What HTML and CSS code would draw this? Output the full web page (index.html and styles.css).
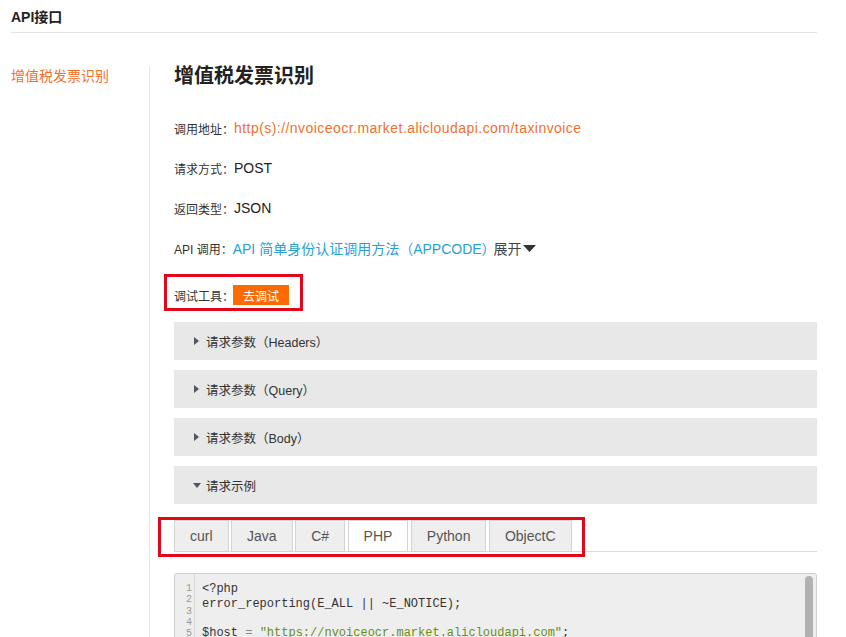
FILE: index.html
```html
<!DOCTYPE html>
<html lang="zh-CN">
<head>
<meta charset="utf-8">
<title>API接口</title>
<link rel="stylesheet" href="styles.css">
</head>
<body>
<div class="page">
  <div class="topbar">API接口</div>
  <div class="layout">
    <aside class="sidenav">
      <div class="nav-item">增值税发票识别</div>
    </aside>
    <main class="main">
      <h1 class="title">增值税发票识别</h1>
      <div class="row"><span class="label">调用地址：</span><span class="value link-orange url">http(s)://nvoiceocr.market.alicloudapi.com/taxinvoice</span></div>
      <div class="row"><span class="label">请求方式：</span><span class="value">POST</span></div>
      <div class="row"><span class="label">返回类型：</span><span class="value">JSON</span></div>
      <div class="row"><span class="label">API 调用：</span><span class="value link-blue">API 简单身份认证调用方法（APPCODE）</span><span class="value expand">展开<svg class="caret" width="13" height="7" viewBox="0 0 13 7"><path d="M0 0H13L6.5 7Z" fill="#333"/></svg></span></div>
      <div class="row debug">
        <span class="label">调试工具：</span><span class="btn">去调试</span>
        <div class="highlight hl-debug"></div>
      </div>
      <div class="panel"><svg class="tri" width="5" height="8" viewBox="0 0 5 8"><path d="M0 0L5 4L0 8Z" fill="#555"/></svg>请求参数（Headers）</div>
      <div class="panel"><svg class="tri" width="5" height="8" viewBox="0 0 5 8"><path d="M0 0L5 4L0 8Z" fill="#555"/></svg>请求参数（Query）</div>
      <div class="panel"><svg class="tri" width="5" height="8" viewBox="0 0 5 8"><path d="M0 0L5 4L0 8Z" fill="#555"/></svg>请求参数（Body）</div>
      <div class="panel"><svg class="tri down" width="8" height="5" viewBox="0 0 8 5"><path d="M0 0H8L4 5Z" fill="#555"/></svg>请求示例</div>
      <div class="tabbar">
        <div class="tabs">
          <span class="tab">curl</span>
          <span class="tab">Java</span>
          <span class="tab">C#</span>
          <span class="tab active">PHP</span>
          <span class="tab">Python</span>
          <span class="tab">ObjectC</span>
          <div class="highlight hl-tabs"></div>
        </div>
      </div>
      <div class="code">
        <div class="gutter">1<br>2<br>3<br>4<br>5<br>6<br>7<br>8<br>9<br>10</div>
        <pre class="source">&lt;?php
error_reporting(E_ALL || ~E_NOTICE);

$host <span class="op">=</span> <span class="str">"https://nvoiceocr.market.alicloudapi.com"</span>;
$path <span class="op">=</span> <span class="str">"/taxinvoice"</span>;
$method <span class="op">=</span> <span class="str">"POST"</span>;
$appcode <span class="op">=</span> <span class="str">"你自己的AppCode"</span>;
$headers <span class="op">=</span> array();</pre>
        <div class="scrollbar"><div class="thumb"></div></div>
      </div>
    </main>
  </div>
</div>
</body>
</html>
```
FILE: styles.css
```css
html, body {
  margin: 0;
  padding: 0;
  background: #fff;
}
body {
  font-family: "Liberation Sans", "Noto Sans CJK SC", sans-serif;
  color: #333;
  overflow: hidden;
}
.page {
  padding: 0 29px 0 11px;
}
.topbar {
  height: 32px;
  border-bottom: 1px solid #e6e6e6;
  display: flex;
  align-items: center;
  font-size: 14px;
  font-weight: bold;
  color: #222;
}
.layout {
  display: flex;
  margin-top: 33px;
}
.sidenav {
  width: 138px;
  flex: none;
  border-right: 1px solid #e8e8e8;
  min-height: 620px;
}
.nav-item {
  font-size: 14px;
  line-height: 20px;
  color: #f4702a;
}
.main {
  flex: 1;
  padding-left: 24px;
  min-width: 0;
}
.title {
  margin: 0;
  font-size: 20px;
  line-height: 20px;
  font-weight: bold;
  color: #222;
}
.row {
  display: flex;
  align-items: center;
  height: 20px;
  margin-top: 20px;
}
.title + .row {
  margin-top: 32px;
}
.label {
  font-size: 12px;
  color: #333;
}
.value {
  font-size: 14px;
  color: #222;
}
.url {
  letter-spacing: 0.45px;
}
.link-orange {
  color: #f4702a;
}
.link-blue {
  color: #27a0d6;
}
.expand {
  color: #444;
  display: flex;
  align-items: center;
  margin-left: -2px;
}
.caret {
  margin-left: 1px;
}
.debug {
  position: relative;
  margin-top: 27px;
}
.btn {
  display: inline-flex;
  align-items: center;
  height: 20px;
  padding: 0 10px;
  margin-left: -1px;
  background: #ff6a00;
  color: #fff;
  font-size: 12px;
}
.highlight {
  position: absolute;
  border: 3px solid #e3061b;
  pointer-events: none;
}
.hl-debug {
  left: -10px;
  top: -11px;
  width: 133px;
  height: 31px;
}
.panel {
  height: 38px;
  background: #e8e8e8;
  display: flex;
  align-items: center;
  padding-left: 20px;
  font-size: 12.5px;
  color: #333;
  margin-bottom: 10px;
}
.debug + .panel {
  margin-top: 17px;
}
.tri {
  margin-right: 7px;
  flex: none;
}
.tri.down {
  margin-left: -1px;
  margin-right: 5px;
}
.tabbar {
  margin-top: 16px;
  border-bottom: 1px solid #dcdcdc;
  height: 31px;
}
.tabs {
  position: relative;
  display: flex;
  gap: 2.5px;
  width: max-content;
}
.tab {
  height: 30px;
  display: flex;
  align-items: center;
  padding: 0 15px;
  border: 1px solid #d3d3d3;
  background: #eeeeee;
  font-size: 14px;
  color: #555;
}
.tab.active {
  background: #fff;
}
.hl-tabs {
  left: -16px;
  top: -3px;
  right: -13px;
  height: 34px;
}
.code {
  position: relative;
  margin-top: 21px;
  display: flex;
  background: #eeeeee;
  border: 1px solid #cfcfcf;
  border-radius: 3px;
  height: 200px;
  overflow: hidden;
}
.gutter {
  width: 20px;
  flex: none;
  box-sizing: border-box;
  padding: 9px 2px 0 0;
  text-align: right;
  font-family: "Liberation Mono", monospace;
  font-size: 10px;
  line-height: 11.3px;
  color: #999;
  border-right: 1px solid #d8d8d8;
}
.source {
  margin: 0;
  padding: 8px 0 0 7px;
  font-family: "Liberation Mono", monospace;
  font-size: 12px;
  line-height: 14.7px;
  color: #333;
}
.op {
  color: #888;
}
.str {
  color: #6a8f12;
}
.scrollbar {
  position: absolute;
  right: 2px;
  top: 2px;
  bottom: 0;
  width: 10px;
}
.thumb {
  margin: 0 auto;
  width: 8px;
  height: 120px;
  border-radius: 4px;
  background: #b2b2b2;
}
```
